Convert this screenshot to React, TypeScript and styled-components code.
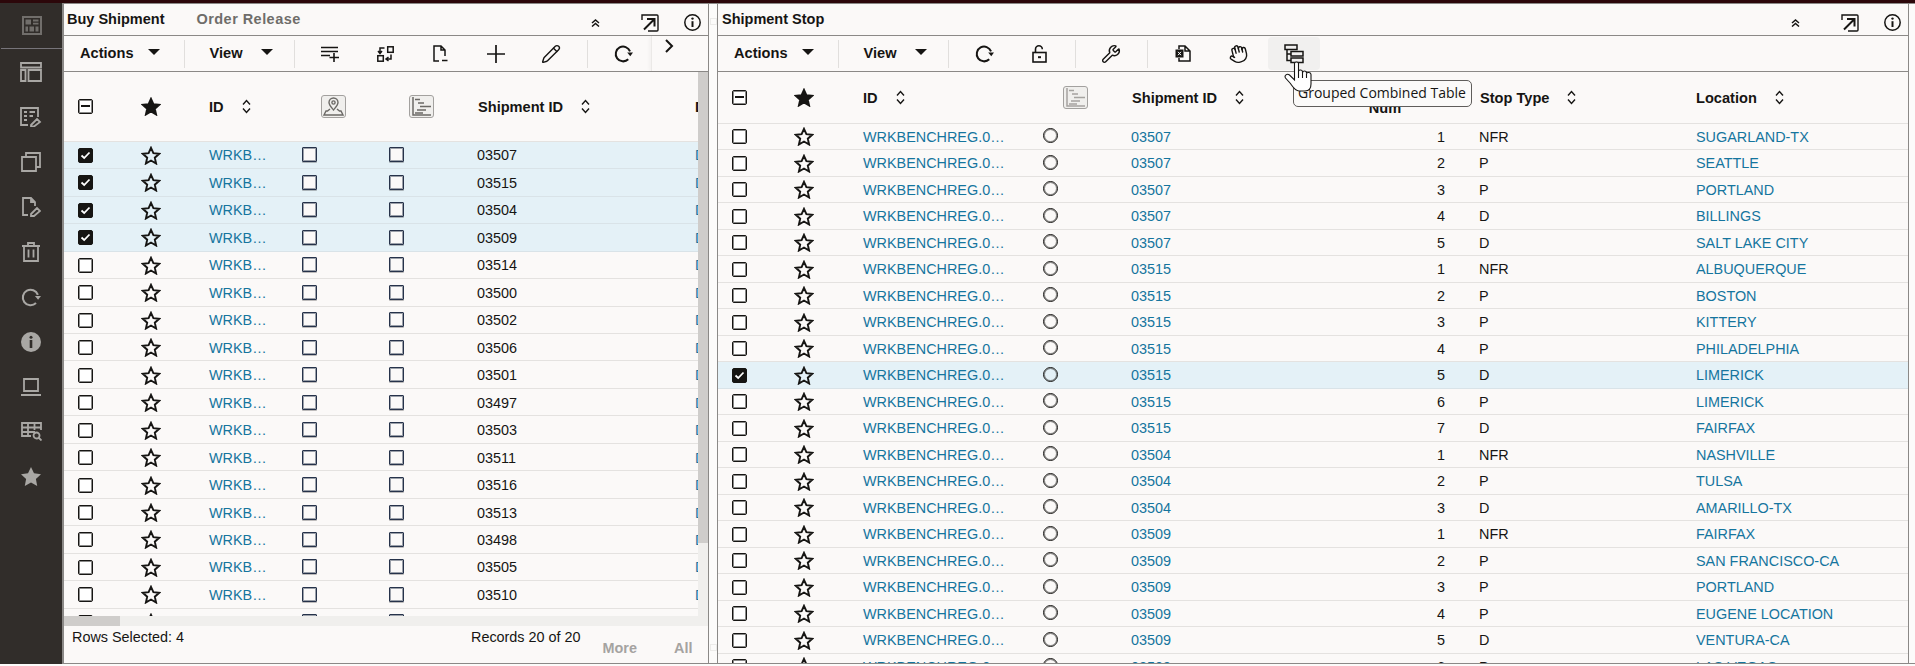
import React from "react";
import styled, { createGlobalStyle } from "styled-components";
import { Pencil, Wrench, Hand } from "lucide-react";

const INK = "#161513";
const RULE = "#8b8987";
const PAPER = "#fbf9f8";
const LINK = "#15759e";
const SIDE_ICON = "#a9a7a4";

const GlobalStyle = createGlobalStyle`
  html, body { margin: 0; padding: 0; background: #fcfbfa; }
  body { font-family: "Liberation Sans", Arial, sans-serif; font-size: 14.4px; color: ${INK}; }
  * { box-sizing: border-box; }
`;

const Page = styled.div`
  width: 1915px; height: 666px; overflow: hidden;
  display: flex; flex-direction: column;
`;
const TopStrip = styled.div`height: 3px; flex: none; background: #2c070a;`;
const Main = styled.div`flex: none; height: 661px; display: flex;`;

const Sidebar = styled.nav`
  flex: none; width: 64px; background: #312d2a; border-right: 2px solid ${RULE};
  display: flex; flex-direction: column; color: ${SIDE_ICON};
`;
const SideLogo = styled.div`
  flex: none; height: 46px; margin: 0 0 0 1px; border-bottom: 1px solid #77747a;
  display: flex; align-items: center; justify-content: center; color: #716e6b;
`;
const SideItem = styled.div`
  flex: none; height: 45px; display: flex; align-items: center; justify-content: center;
`;

const Workspace = styled.div`
  flex: 1; display: flex; border-top: 1px solid ${RULE}; border-bottom: 1px solid ${RULE};
`;
const LeftPanel = styled.section`
  flex: none; width: 645px; display: flex; flex-direction: column; background: ${PAPER};
  border-right: 1px solid ${RULE};
`;
const Splitter = styled.div`
  flex: none; width: 8px; display: flex; flex-direction: column; justify-content: space-between;
  align-items: center; padding: 14px 0 12px; color: #ecebe9;
`;
const RightPanel = styled.section`
  flex: none; width: 1192px; display: flex; flex-direction: column; background: ${PAPER};
  border-left: 1px solid ${RULE}; border-right: 1px solid ${RULE};
`;

const PanelHeader = styled.header`
  flex: none; height: 32px; display: flex; align-items: flex-start; border-bottom: 1px solid ${RULE};
`;
const PanelTitle = styled.h2<{ $muted?: boolean; $inset?: number }>`
  margin: 0; font-size: 14.5px; font-weight: 700; line-height: 31px; padding-left: ${(p) => p.$inset ?? 3}px;
  margin-right: ${(p) => (p.$muted ? "0" : "29px")};
  letter-spacing: ${(p) => (p.$muted ? "0.45px" : "0")};
  color: ${(p) => (p.$muted ? "#6f6d6a" : INK)};
`;
const HeaderActions = styled.div`margin-left: auto; display: flex; height: 31px;`;
const HeaderAction = styled.div<{ $w: number }>`
  width: ${(p) => p.$w}px; display: flex; align-items: center; justify-content: center; padding-top: 6px;
`;

const Toolbar = styled.div`
  flex: none; height: 36px; display: flex; align-items: center; border-bottom: 1px solid ${RULE};
  font-weight: 700; font-size: 14.6px;
`;
const ActionsMenu = styled.div`
  display: flex; align-items: center; gap: 14px; padding: 0 16px 0 16px; margin-top: -1px;
`;
const ViewMenu = styled(ActionsMenu)`gap: 18px; padding: 0 13px 0 17px;`;
const Caret = styled.span`
  width: 0; height: 0; border-left: 6px solid transparent; border-right: 6px solid transparent;
  border-top: 6px solid ${INK}; margin-top: -2px;
`;
const ToolSep = styled.div`flex: none; width: 1px; height: 28px; margin: 0 8px; background: #e1dfdd;`;
const ToolButton = styled.div<{ $active?: boolean }>`
  position: relative; flex: none; height: 33px;
  width: ${(p) => (p.$active ? "52px" : "55px")};
  margin-left: ${(p) => (p.$active ? "2px" : "0")};
  display: flex; align-items: center; justify-content: center;
  border-radius: 4px; background: ${(p) => (p.$active ? "#f1f0ef" : "transparent")};
`;
const WideToolButton = styled(ToolButton)`width: 55.3px;`;
const Overflow = styled.div`
  flex: none; margin-left: auto; width: 57px; height: 35px; border-left: 1px solid #ebe9e7;
  box-shadow: -2px 0 3px rgba(0,0,0,0.03);
  display: flex; justify-content: flex-start; padding: 3px 0 0 12px;
`;

const LeftBody = styled.div`flex: none; height: 544px; display: flex;`;
const LeftScroll = styled.div`flex: 1; min-width: 0; overflow: hidden;`;
const RightScroll = styled.div`flex: 1; min-height: 0; overflow: hidden;`;
const VTrack = styled.div`flex: none; width: 10px; background: #f0efed;`;
const VThumb = styled.div`height: 471px; background: #cfcdcb;`;
const HTrack = styled.div`flex: none; height: 10px; background: #f0efed;`;
const HThumb = styled.div`width: 56px; height: 100%; background: #cfcdcb;`;

const LEFT_COLS = "62px 50px 126px 87px 88px 218px 40px";
const RIGHT_COLS = "62px 48px 214px 89px 169px 179px 217px 200px";

const Row = styled.div<{ $cols: string; $h: number; $selected?: boolean }>`
  display: grid; grid-template-columns: ${(p) => p.$cols}; align-items: center;
  height: ${(p) => p.$h}px; padding-top: 1px;
  border-bottom: 1px solid ${(p) => (p.$selected ? "#d9e3e8" : "#e4e2e0")};
  background: ${(p) => (p.$selected ? "#e4f1f7" : "transparent")};
`;
const HeadRow = styled(Row)`padding-top: 0; font-size: 14.6px;`;
const BoxCell = styled.div<{ $pad: number }>`padding-left: ${(p) => p.$pad}px; display: flex; align-items: center;`;
const StarCell = styled.div`display: flex; justify-content: center;`;
const PlainCell = styled.div`display: flex; align-items: center; white-space: nowrap; overflow: hidden;`;
const RadioCell = styled.div`display: flex; align-items: center; padding-left: 1px;`;
const NumCell = styled.div`text-align: right; padding-right: 34px;`;
const LinkText = styled.a`color: ${LINK}; white-space: nowrap;`;
const IdCell = styled.div<{ $lead: number; $trail: number }>`
  padding: 0 ${(p) => p.$trail}px 0 ${(p) => p.$lead}px; color: ${LINK};
  overflow: hidden; white-space: nowrap; text-overflow: ellipsis;
`;
const HeadCell = styled.div<{ $pad?: number }>`
  display: flex; align-items: center; gap: 18px; font-weight: 700; white-space: nowrap;
  padding-left: ${(p) => p.$pad ?? 1}px;
`;
const HeadLabel = styled.span`margin-top: 2px;`;
const StackedHead = styled.div`
  font-weight: 700; line-height: 17px; text-align: center; width: 40px;
  margin-left: 65px; padding-top: 5px;
`;
const IconButton = styled.div<{ $left?: number }>`
  width: 25px; height: 23px; border: 1px solid #a3a19f; border-radius: 3px; background: #f0efed;
  margin-left: ${(p) => p.$left ?? 0}px; color: #6b6966;
  display: flex; align-items: center; justify-content: center;
`;
const Check = styled.span<{ $on?: boolean }>`
  width: 15px; height: 15px; flex: none; border-radius: 2px; border: 1px solid ${INK};
  box-shadow: inset 0 0 0 1px rgba(22, 21, 19, 0.5);
  background: ${(p) => (p.$on ? INK : "#fff")}; color: #fff;
  display: flex; align-items: center; justify-content: center;
`;
const PlainBox = styled.span`
  width: 15px; height: 15px; border: 1px solid #26324a; border-radius: 1px; background: ${PAPER};
  box-shadow: 0 1px 0 rgba(0,0,0,0.25), inset 0 0 0 1px rgba(38, 50, 74, 0.45); margin-bottom: 1px;
`;
const Radio = styled.span`
  width: 15px; height: 15px; border: 1px solid ${INK}; border-radius: 50%; margin-top: -2px;
  box-shadow: inset 0 0 0 1px rgba(22, 21, 19, 0.5);
`;

const Footer = styled.footer`
  flex: 1; display: flex; align-items: flex-start; padding: 2px 0 0 8px; white-space: nowrap;
`;
const FooterCount = styled.span`flex: none; line-height: 18px;`;
const FooterRecords = styled.span`flex: none; line-height: 18px; margin-left: 287px;`;
const FooterLink = styled.span<{ $gap: number }>`
  flex: none; font-weight: 700; color: #a5a3a1; margin: 11px 0 0 ${(p) => p.$gap}px; line-height: 18px;
`;

const Tooltip = styled.div`
  position: absolute; left: 25px; top: 43px; z-index: 5; height: 27px; width: 179px;
  border: 1px solid #5f5d5b; border-radius: 5px; background: #fbfaf9;
  font: 400 14px/24px "Open Sans", "Noto Sans", sans-serif; color: ${INK};
  text-align: center; white-space: nowrap;
`;
const Pointer = styled.svg`position: absolute; left: 16px; top: 23px; z-index: 6;`;

const Star = ({ filled }: { filled?: boolean }) => (
  <svg width="20" height="19" viewBox="0 0 20 19">
    <path d="M10 1.8l2.4 5.4 5.8.6-4.4 3.9 1.3 5.8L10 14.5l-5.1 3 1.3-5.8L1.8 7.8l5.8-.6z"
      fill={filled ? INK : "none"} stroke={INK} strokeWidth="1.9" strokeLinejoin="miter" />
  </svg>
);
const Sort = () => (
  <svg width="9" height="15" viewBox="0 0 9 15" fill="none" stroke={INK} strokeWidth="1.4">
    <path d="M1 5.5L4.5 1.5L8 5.5M1 9.5L4.5 13.5L8 9.5" />
  </svg>
);
const MiniCheck = () => (
  <svg width="11" height="9" viewBox="0 0 11 9" fill="none" stroke="#fff" strokeWidth="1.8">
    <path d="M1.5 4.5L4.2 7L9.5 1.5" />
  </svg>
);
const MiniDash = () => (
  <svg width="9" height="2" viewBox="0 0 9 2"><rect width="9" height="2" fill={INK} /></svg>
);
const Info = () => (
  <svg width="17" height="17" viewBox="0 0 17 17" fill="none" stroke={INK}>
    <circle cx="8.5" cy="8.5" r="7.7" strokeWidth="1.5" />
    <path d="M8.5 7.2V13" strokeWidth="2" />
    <circle cx="8.5" cy="4.6" r="1.2" fill={INK} stroke="none" />
  </svg>
);
const OpenOut = () => (
  <svg width="18" height="18" viewBox="0 0 18 18" fill="none" stroke={INK}>
    <path d="M1 6V1H16A1 1 0 0 1 17 2V16A1 1 0 0 1 16 17H7" strokeWidth="1.4" />
    <path d="M3 15.5L13 5.5M6 5H13.5V12.5" strokeWidth="2" />
  </svg>
);
const Collapse = () => (
  <svg width="9" height="8" viewBox="0 0 9 8" fill="none" stroke={INK} strokeWidth="1.5">
    <path d="M1 4L4.5 1L8 4M1 7.5L4.5 4.5L8 7.5" />
  </svg>
);
const AddRows = () => (
  <svg width="18" height="16" viewBox="0 0 18 16" fill="none" stroke={INK} strokeWidth="1.6">
    <path d="M0 1.5H17M0 5.5H17M0 9.5H9M13 7V16M8.5 11.5H18" />
  </svg>
);
const SwapCells = () => (
  <svg width="17" height="16" viewBox="0 0 17 16" fill="none" stroke={INK} strokeWidth="1.5">
    <rect x="10.7" y="0.8" width="5.5" height="5.5" />
    <rect x="0.8" y="9.7" width="5.5" height="5.5" />
    <path d="M7.5 2H3V7M1 5L3 7.5L5 5M14 8.5V13H9.5M11.5 11L9 13L11.5 15" />
  </svg>
);
const DocMinus = () => (
  <svg width="15" height="17" viewBox="0 0 15 17" fill="none" stroke={INK} strokeWidth="1.5">
    <path d="M6 16H1V1H8L12 5V11M8 1V5H12M9 15.5H14.5" />
  </svg>
);
const Plus = () => (
  <svg width="18" height="18" viewBox="0 0 18 18" fill="none" stroke={INK} strokeWidth="1.7">
    <path d="M9 0V18M0 9H18" />
  </svg>
);
const Refresh = ({ size = 19, dark = true }: { size?: number; dark?: boolean }) => (
  <svg width={size} height={size} viewBox="0 0 18 18" fill="none" stroke="currentColor" color={dark ? INK : undefined} strokeWidth="1.9">
    <path d="M15.2 7A7 7 0 1 0 13.5 14.5" />
    <path d="M12.5 8H18L15.4 11.5Z" fill="currentColor" stroke="none" />
  </svg>
);
const LockOpen = () => (
  <svg width="15" height="18" viewBox="0 0 15 18" fill="none" stroke={INK} strokeWidth="1.6">
    <rect x="1" y="7.5" width="13" height="9.5" />
    <path d="M3.5 7.5V4.2A3.4 3.4 0 0 1 10.3 4.2" />
    <path d="M6 12.2H9" strokeWidth="2" />
  </svg>
);
const ExcelDoc = () => (
  <svg width="16" height="17" viewBox="0 0 16 17" fill="none" stroke={INK} strokeWidth="1.5">
    <path d="M4 4V1H10L15 6V16H4V13M10 1V6H15" />
    <rect x="0.5" y="4.5" width="8" height="8" fill={INK} stroke="none" />
    <path d="M3 6.8L6 10.2M6 6.8L3 10.2" stroke="#fff" strokeWidth="1" />
  </svg>
);
const TiltedHand = styled(Hand)`transform: rotate(-14deg);`;
const Grouped = () => (
  <svg width="20" height="20" viewBox="0 0 20 20" fill="none" stroke={INK} strokeWidth="1.5">
    <rect x="1" y="1" width="12" height="4.5" />
    <rect x="7" y="7.5" width="12" height="4.5" />
    <rect x="7" y="14" width="12" height="4.5" />
    <path d="M3 5.5V16.5H7M3 10H7" />
  </svg>
);
const PinGlyph = () => (
  <svg width="21" height="19" viewBox="0 0 21 19" fill="none" stroke="currentColor" strokeWidth="1.4">
    <path d="M10.5 13C8 10 6 8 6 5.5A4.5 4.5 0 0 1 15 5.5C15 8 13 10 10.5 13Z" />
    <circle cx="10.5" cy="5.5" r="1.6" />
    <path d="M7 12L4.5 14H3L1 18H20L18 14H16.5L14 12" />
  </svg>
);
const GanttGlyph = ({ light }: { light?: boolean }) => (
  <svg width="21" height="19" viewBox="0 0 21 19" fill="none" stroke={light ? "#a5a3a0" : "#6b6966"} strokeWidth="1.5">
    <path d="M2 0V18H20" />
    <path d="M4 2.5H9M7 6H13M9 9.5H20M6 13H15M4 16H12" />
  </svg>
);
const Cursor = () => (
  <Pointer width="29" height="32" viewBox="0 0 29 32" fill="#fff" stroke={INK} strokeWidth="1.1">
    <path d="M10.5 3.5C10.5 1.5 14.5 1.5 14.5 3.5L14.5 11C15 9.5 18 9.5 18.5 11.5L18.5 12.5C19 10.5 22 10.5 22.5 12.5L22.5 13.5C23 12 27 12 27 14.5L27 24C27 28 25 31 21 31L15 31C11 31 9 27 6 23L1.5 18C0 15.5 3 13 5.5 15L10.5 20Z" />
    <path d="M14.5 11V18M18.5 12V18M22.5 13.5V18" fill="none" />
  </Pointer>
);
const SplitMark = () => (
  <svg width="7" height="7" viewBox="0 0 7 7" fill="none" stroke="currentColor"><rect x="0.5" y="0.5" width="6" height="6" /></svg>
);

const SideGlyph = ({ d, w = 22, h = 20, fill }: { d: string; w?: number; h?: number; fill?: boolean }) => (
  <svg width={w} height={h} viewBox={`0 0 ${w} ${h}`} fill={fill ? "currentColor" : "none"} stroke={fill ? "none" : "currentColor"} strokeWidth="1.8">
    <path d={d} />
  </svg>
);
const SIDE_PATHS: { d: string; w?: number; h?: number; fill?: boolean }[] = [
  { d: "M1 1H21V5.5H1ZM1 8V19H5.5V8ZM8.5 8H21V19H8.5Z" },
  { d: "M8 18H1V1H18V10M4 5H7M9.5 5H15M4 9H7M9.5 9H13M4 13H7M11 18L17 12L20 15L14 19.5H11Z", h: 20 },
  { d: "M5 5V1H19V15H15M1 5H15V19H1Z", w: 20 },
  { d: "M6 18H1V1H9L13 5V9M9 1V5H13M9 17L15 11L18 14L12 19H9Z", w: 19 },
  { d: "M1 4H19M7 4V1H13V4M3 4V19H17V4M7.5 7.5V15.5M12.5 7.5V15.5", w: 20 },
];

type StopRow = [string, number, string, string, boolean?];
const STOPS: StopRow[] = [
  ["03507", 1, "NFR", "SUGARLAND-TX"], ["03507", 2, "P", "SEATTLE"], ["03507", 3, "P", "PORTLAND"],
  ["03507", 4, "D", "BILLINGS"], ["03507", 5, "D", "SALT LAKE CITY"], ["03515", 1, "NFR", "ALBUQUERQUE"],
  ["03515", 2, "P", "BOSTON"], ["03515", 3, "P", "KITTERY"], ["03515", 4, "P", "PHILADELPHIA"],
  ["03515", 5, "D", "LIMERICK", true], ["03515", 6, "P", "LIMERICK"], ["03515", 7, "D", "FAIRFAX"],
  ["03504", 1, "NFR", "NASHVILLE"], ["03504", 2, "P", "TULSA"], ["03504", 3, "D", "AMARILLO-TX"],
  ["03509", 1, "NFR", "FAIRFAX"], ["03509", 2, "P", "SAN FRANCISCO-CA"], ["03509", 3, "P", "PORTLAND"],
  ["03509", 4, "P", "EUGENE LOCATION"], ["03509", 5, "D", "VENTURA-CA"], ["03509", 6, "P", "LAS VEGAS"],
];
const SHIPMENTS = ["03507","03515","03504","03509","03514","03500","03502","03506","03501","03497","03503","03511","03516","03513","03498","03505","03510","03512"];

const PanelEnd = () => (
  <HeaderActions>
    <HeaderAction $w={58}><Collapse /></HeaderAction>
    <HeaderAction $w={52}><OpenOut /></HeaderAction>
    <HeaderAction $w={32}><Info /></HeaderAction>
  </HeaderActions>
);
const Menus = () => (
  <>
    <ActionsMenu>Actions<Caret /></ActionsMenu>
    <ToolSep />
    <ViewMenu>View<Caret /></ViewMenu>
    <ToolSep />
  </>
);

export default function App() {
  return (
    <Page>
      <GlobalStyle />
      <TopStrip />
      <Main>
        <Sidebar>
          <SideLogo>
            <svg width="20" height="19" viewBox="0 0 20 19" fill="currentColor">
              <path fillRule="evenodd" d="M0 0H20V19H0ZM2 2V17H18V2ZM3.5 3.5H9V8.5H3.5ZM11 3.5H16.5V5.5H11ZM11 6.7H16.5V8.5H11ZM3.5 10.5H6V15.5H3.5ZM7.5 10.5H12V15.5H7.5ZM13.5 10.5H16.5V15.5H13.5Z" />
            </svg>
          </SideLogo>
          {SIDE_PATHS.map((p, i) => (
            <SideItem key={i}><SideGlyph {...p} /></SideItem>
          ))}
          <SideItem><Refresh size={20} dark={false} /></SideItem>
          <SideItem>
            <svg width="20" height="20" viewBox="0 0 20 20">
              <circle cx="10" cy="10" r="10" fill="currentColor" />
              <circle cx="10" cy="5.3" r="1.5" fill="#312d2a" />
              <rect x="8.7" y="8" width="2.6" height="8" fill="#312d2a" />
            </svg>
          </SideItem>
          <SideItem><SideGlyph w={20} h={18} d="M3 1H17V13H3ZM0 17H20" /></SideItem>
          <SideItem><SideGlyph w={21} h={19} d="M10 14H1V1H20V8M1 5.5H20M1 10H14M7 1V14M13.5 1V8M15.5 10.5A3 3 0 1 0 15.6 16.5A3 3 0 1 0 15.5 10.5M18 16L20.5 18.5" /></SideItem>
          <SideItem><SideGlyph fill w={20} h={19} d="M10 0l3 6.3 7 .9-5.1 4.8 1.3 7L10 15.6 3.8 19l1.3-7L0 7.2l7-.9z" /></SideItem>
        </Sidebar>

        <Workspace>
          <LeftPanel>
            <PanelHeader>
              <PanelTitle>Buy Shipment</PanelTitle>
              <PanelTitle $muted>Order Release</PanelTitle>
              <PanelEnd />
            </PanelHeader>
            <Toolbar>
              <Menus />
              <WideToolButton><AddRows /></WideToolButton>
              <WideToolButton><SwapCells /></WideToolButton>
              <WideToolButton><DocMinus /></WideToolButton>
              <WideToolButton><Plus /></WideToolButton>
              <WideToolButton><Pencil size={20} strokeWidth={1.7} color={INK} /></WideToolButton>
              <ToolSep />
              <ToolButton><Refresh /></ToolButton>
              <Overflow>
                <svg width="10" height="14" viewBox="0 0 10 14" fill="none" stroke={INK} strokeWidth="2"><path d="M2 1L8 7L2 13" /></svg>
              </Overflow>
            </Toolbar>
            <LeftBody>
              <LeftScroll>
                <HeadRow $cols={LEFT_COLS} $h={69.7}>
                  <BoxCell $pad={14}><Check><MiniDash /></Check></BoxCell>
                  <StarCell><Star filled /></StarCell>
                  <HeadCell $pad={33}><HeadLabel>ID</HeadLabel><Sort /></HeadCell>
                  <HeadCell $pad={0}><IconButton $left={19}><PinGlyph /></IconButton></HeadCell>
                  <HeadCell $pad={0}><IconButton $left={20}><GanttGlyph /></IconButton></HeadCell>
                  <HeadCell><HeadLabel>Shipment ID</HeadLabel><Sort /></HeadCell>
                  <HeadCell $pad={0}><HeadLabel>D</HeadLabel></HeadCell>
                </HeadRow>
                {SHIPMENTS.map((id, i) => (
                  <Row key={id} $cols={LEFT_COLS} $h={27.47} $selected={i < 4}>
                    <BoxCell $pad={14}><Check $on={i < 4}>{i < 4 && <MiniCheck />}</Check></BoxCell>
                    <StarCell><Star /></StarCell>
                    <IdCell $lead={33} $trail={30}>WRKBENCHREG.{id}</IdCell>
                    <PlainCell><PlainBox /></PlainCell>
                    <PlainCell><PlainBox /></PlainCell>
                    <PlainCell>{id}</PlainCell>
                    <PlainCell><LinkText>D</LinkText></PlainCell>
                  </Row>
                ))}
              </LeftScroll>
              <VTrack><VThumb /></VTrack>
            </LeftBody>
            <HTrack><HThumb /></HTrack>
            <Footer>
              <FooterCount>Rows Selected: 4</FooterCount>
              <FooterRecords>Records 20 of 20</FooterRecords>
              <FooterLink $gap={22}>More</FooterLink>
              <FooterLink $gap={37}>All</FooterLink>
            </Footer>
          </LeftPanel>

          <Splitter><SplitMark /><SplitMark /></Splitter>

          <RightPanel>
            <PanelHeader>
              <PanelTitle $inset={4}>Shipment Stop</PanelTitle>
              <PanelEnd />
            </PanelHeader>
            <Toolbar>
              <Menus />
              <ToolButton><Refresh /></ToolButton>
              <ToolButton><LockOpen /></ToolButton>
              <ToolSep />
              <ToolButton><Wrench size={20} strokeWidth={1.7} color={INK} /></ToolButton>
              <ToolSep />
              <ToolButton><ExcelDoc /></ToolButton>
              <ToolButton><TiltedHand size={20} strokeWidth={1.7} color={INK} /></ToolButton>
              <ToolButton $active>
                <Grouped />
                <Cursor />
                <Tooltip>Grouped Combined Table</Tooltip>
              </ToolButton>
            </Toolbar>
            <RightScroll>
              <HeadRow $cols={RIGHT_COLS} $h={51.5}>
                <BoxCell $pad={14}><Check><MiniDash /></Check></BoxCell>
                <StarCell><Star filled /></StarCell>
                <HeadCell $pad={35}><HeadLabel>ID</HeadLabel><Sort /></HeadCell>
                <HeadCell $pad={0}><IconButton $left={21}><GanttGlyph light /></IconButton></HeadCell>
                <HeadCell><HeadLabel>Shipment ID</HeadLabel><Sort /></HeadCell>
                <StackedHead>Stop Num</StackedHead>
                <HeadCell><HeadLabel>Stop Type</HeadLabel><Sort /></HeadCell>
                <HeadCell $pad={0}><HeadLabel>Location</HeadLabel><Sort /></HeadCell>
              </HeadRow>
              {STOPS.map(([ship, num, type, loc, sel], i) => (
                <Row key={i} $cols={RIGHT_COLS} $h={26.5} $selected={sel}>
                  <BoxCell $pad={14}><Check $on={sel}>{sel && <MiniCheck />}</Check></BoxCell>
                  <StarCell><Star /></StarCell>
                  <IdCell $lead={35} $trail={32}>WRKBENCHREG.{ship}</IdCell>
                  <RadioCell><Radio /></RadioCell>
                  <PlainCell><LinkText>{ship}</LinkText></PlainCell>
                  <NumCell>{num}</NumCell>
                  <PlainCell>{type}</PlainCell>
                  <PlainCell><LinkText>{loc}</LinkText></PlainCell>
                </Row>
              ))}
            </RightScroll>
          </RightPanel>
        </Workspace>
      </Main>
    </Page>
  );
}
